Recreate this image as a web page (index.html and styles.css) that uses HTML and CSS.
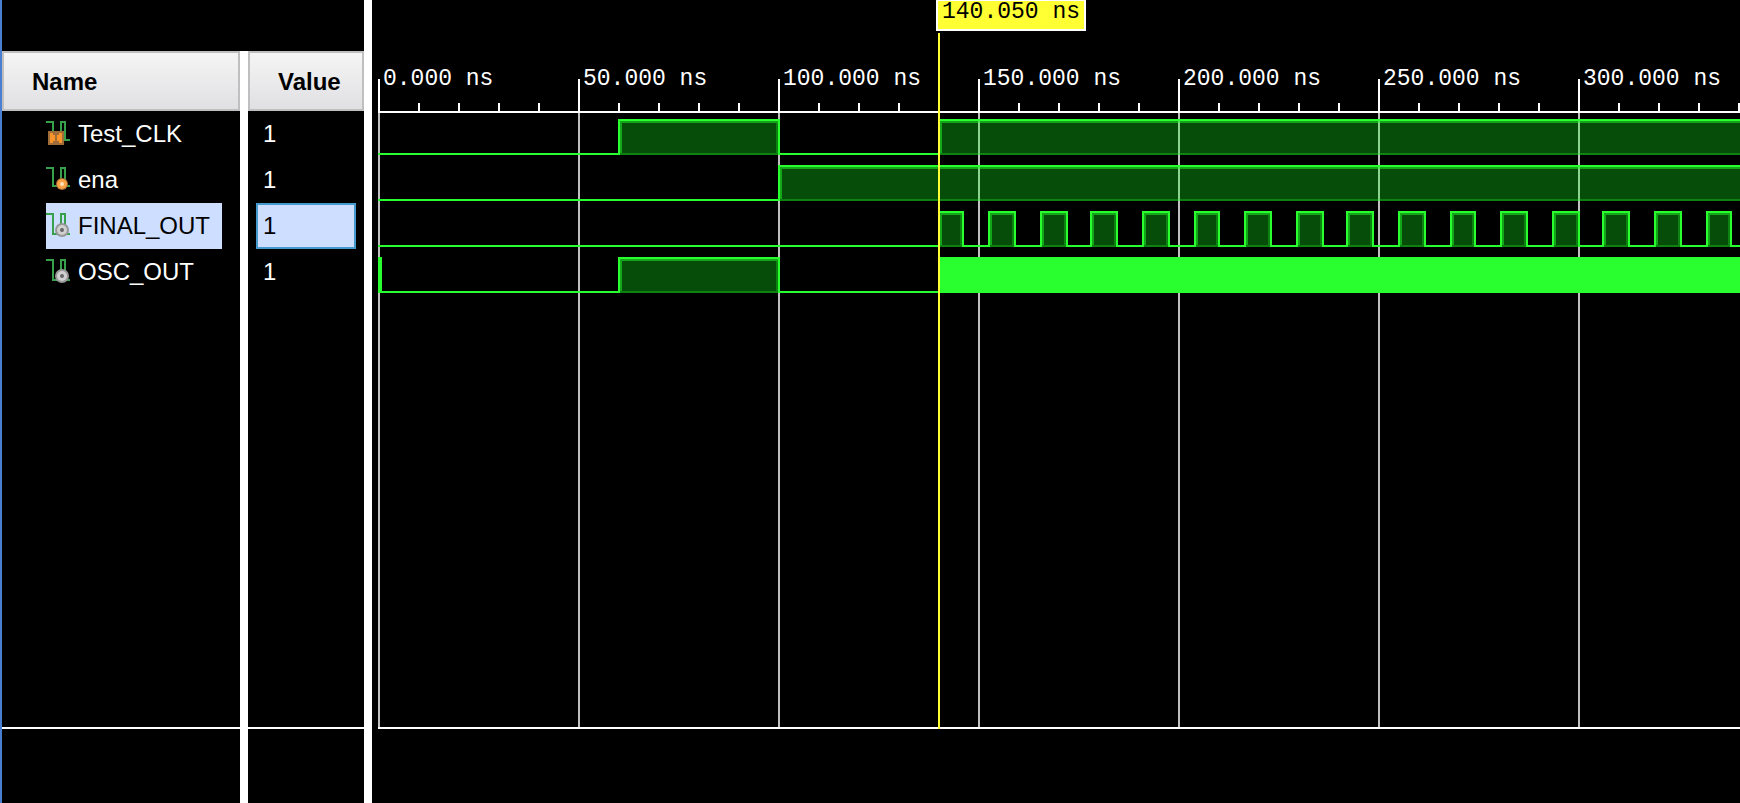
FILE: index.html
```html
<!DOCTYPE html>
<html lang="en">
<head>
<meta charset="utf-8">
<title>Waveform</title>
<link rel="stylesheet" href="styles.css">
</head>
<body>
<main class="viewer">
  <section class="column names">
    <h2 class="head">Name</h2>
    <ul class="rows">
      <li class="row"><span class="signal">
        <svg class="icon" viewBox="0 0 24 26"><path class="trace" d="M0 2H7V18M15 18V2H19V20H24"/><rect class="clk-edge" x="2" y="11" width="16" height="14"/><rect class="clk-body" x="4" y="13" width="12" height="10"/><path class="clk-glyph" d="M7 14H13M7 22H13M10 14V22"/></svg>Test_CLK</span></li>
      <li class="row"><span class="signal">
        <svg class="icon" viewBox="0 0 24 26"><path class="trace" d="M0 2H7V20H11M15 14V2H19V20H24"/><circle class="in-edge" cx="16" cy="18" r="6"/><circle class="in-body" cx="16" cy="18" r="5"/><circle class="in-core" cx="16" cy="18" r="2"/></svg>ena</span></li>
      <li class="row"><span class="signal selected">
        <svg class="icon" viewBox="0 0 24 26"><path class="trace" d="M0 2H7V22H11M15 14V2H19V22H24"/><circle class="out-edge" cx="16" cy="18" r="7"/><circle class="out-body" cx="16" cy="18" r="5"/><circle class="out-core" cx="16" cy="18" r="2"/></svg>FINAL_OUT</span></li>
      <li class="row"><span class="signal">
        <svg class="icon" viewBox="0 0 24 26"><path class="trace" d="M0 2H7V22H11M15 14V2H19V22H24"/><circle class="out-edge" cx="16" cy="18" r="7"/><circle class="out-body" cx="16" cy="18" r="5"/><circle class="out-core" cx="16" cy="18" r="2"/></svg>OSC_OUT</span></li>
    </ul>
    <div class="foot"></div>
  </section>
  <div class="splitter short"></div>
  <section class="column values">
    <h2 class="head">Value</h2>
    <ul class="rows">
      <li class="row"><span class="value">1</span></li>
      <li class="row"><span class="value">1</span></li>
      <li class="row"><span class="value selected">1</span></li>
      <li class="row"><span class="value">1</span></li>
    </ul>
    <div class="foot"></div>
  </section>
  <div class="splitter"></div>
  <section class="waves">
    <div class="ruler">
      <span class="major">0.000 ns</span><span class="major">50.000 ns</span><span class="major">100.000 ns</span><span class="major">150.000 ns</span><span class="major">200.000 ns</span><span class="major">250.000 ns</span><span class="major">300.000 ns</span>
    </div>
    <div class="plot">
      <svg class="wave" data-pulses="240-402 560-3000"></svg>
      <svg class="wave" data-pulses="400-3000"></svg>
      <svg class="wave" data-pulses="560-586 610-638 662-690 712-740 764-792 816-842 866-894 918-946 968-996 1020-1048 1072-1098 1122-1150 1174-1202 1224-1252 1276-1304 1328-1354 1380-1406"></svg>
      <svg class="wave" data-pulses="240-402" data-solid="0-4 560-3000"></svg>
    </div>
    <div class="foot"></div>
    <div class="cursor"><span class="flag">140.050 ns</span></div>
  </section>
</main>
<script src="waves.js"></script>
</body>
</html>
```
FILE: styles.css
```css
* { box-sizing: border-box; }

body {
  margin: 0;
  background: #000;
  color: #fff;
  font-family: "Liberation Sans", Arial, sans-serif;
}

.viewer {
  display: flex;
  height: 100vh;
  overflow: hidden;
  border-left: 2px solid #4a7ed0;
}

.column {
  display: flex;
  flex-direction: column;
  flex: none;
  padding-top: 51px;
}

.names { width: 238px; }
.values { width: 116px; }

.head {
  margin: 0;
  height: 60px;
  padding-left: 28px;
  border: 2px solid #bfbfbf;
  background: linear-gradient(#f5f5f5, #e0e0e3);
  color: #000;
  font-size: 24px;
  font-weight: bold;
  line-height: 58px;
}

.rows {
  flex: 1;
  margin: 0;
  padding: 0;
  list-style: none;
  border-bottom: 2px solid #fff;
}

.row {
  display: flex;
  height: 46px;
  font-size: 24px;
  line-height: 46px;
}

.signal {
  display: flex;
  margin-left: 44px;
  padding-right: 12px;
}

.signal.selected { background: #cddeff; color: #000; }

.icon {
  width: 24px;
  height: 26px;
  margin: 9px 8px 0 0;
}

.trace { fill: none; stroke: #36a04b; stroke-width: 2; }
.clk-edge { fill: #a06c3a; }
.clk-body { fill: #f7942a; }
.clk-glyph { fill: none; stroke: #a06c3a; stroke-width: 2; }
.in-edge { fill: #a86a35; }
.in-body { fill: #fba245; }
.in-core { fill: #ffe0b8; }
.out-edge { fill: #979797; }
.out-body { fill: #d0d0d0; }
.out-core { fill: #666; }

.value {
  flex: 1;
  margin: 0 8px;
  padding-left: 7px;
}

.value.selected {
  border: 2px solid #4499cf;
  padding-left: 5px;
  background: #cddeff;
  color: #000;
  line-height: 42px;
}

.foot { height: 74px; flex: none; }

.splitter { width: 8px; flex: none; background: #fff; }
.splitter.short { margin-top: 51px; }

.waves {
  position: relative;
  display: flex;
  flex-direction: column;
  flex: 1;
  min-width: 0;
  padding-left: 6px;
}

.ruler {
  display: flex;
  height: 113px;
  padding-top: 66px;
  overflow: hidden;
  border-bottom: 2px solid #fff;
  background:
    repeating-linear-gradient(90deg, #fff 0 2px, transparent 2px 200px) 0 79px / 100% 32px no-repeat,
    repeating-linear-gradient(90deg, #fff 0 2px, transparent 2px 40px) 0 103px / 100% 8px no-repeat;
}

.major {
  flex: none;
  width: 200px;
  padding-left: 5px;
}

.major, .flag {
  font-family: "Liberation Mono", "Courier New", monospace;
  font-size: 23px;
  line-height: 26px;
  white-space: pre;
}

.plot {
  flex: 1;
  border-bottom: 2px solid #fff;
  background: repeating-linear-gradient(90deg, #c0c0c0 0 2px, transparent 2px 200px);
}

.wave {
  display: block;
  width: 100%;
  height: 46px;
  shape-rendering: crispEdges;
}

.fill { fill: #10ff1c; fill-opacity: 0.3; }
.lit { fill: #20ff28; fill-opacity: 0.5; }
.shade { fill: #20ff28; fill-opacity: 0.3; }
.line { fill: #29ff2f; }

.cursor {
  position: absolute;
  left: 566px;
  top: 33px;
  bottom: 74px;
  width: 2px;
  background: #ffff33;
}

.flag {
  position: absolute;
  left: -2px;
  bottom: 100%;
  height: 31px;
  margin-bottom: 2px;
  padding: 0 4px;
  border: 2px solid #fff;
  border-top-width: 1px;
  background: #ffff33;
  color: #000;
  line-height: 22px;
}
```
FILE: waves.js
```js
// Each row is 46px tall, the high level starts at 6 and the low level ends at 42.
const HIGH = 6, LOW = 42, END = 3000;

function spans(text) {
  return (text || "").split(" ").filter(Boolean).map(s => s.split("-").map(Number));
}

function rect(svg, name, x, y, right, bottom) {
  if (right <= x) return;
  const r = document.createElementNS("http://www.w3.org/2000/svg", "rect");
  r.setAttribute("class", name);
  r.setAttribute("x", x);
  r.setAttribute("y", y);
  r.setAttribute("width", right - x);
  r.setAttribute("height", bottom - y);
  svg.append(r);
}

document.querySelectorAll(".wave").forEach(svg => {
  const pulses = spans(svg.dataset.pulses).map(p => [...p, false]);
  const solids = spans(svg.dataset.solid).map(p => [...p, true]);
  let low = 0;
  for (const [a, b, solid] of [...pulses, ...solids].sort((p, q) => p[0] - q[0])) {
    rect(svg, "line", low, LOW - 2, a, LOW);
    low = b;
    if (solid) {
      rect(svg, "line", a, HIGH, b, LOW);
      continue;
    }
    rect(svg, "line", a, HIGH, b, HIGH + 2);
    rect(svg, "line", a, HIGH + 2, a + 2, LOW);
    rect(svg, "line", b - 2, HIGH + 2, b, LOW);
    rect(svg, "fill", a + 2, HIGH + 2, b - 2, LOW);
    rect(svg, "lit", a + 2, HIGH + 2, b - 2, HIGH + 4);
    rect(svg, "lit", a + 2, HIGH + 4, a + 4, LOW - 2);
    rect(svg, "shade", b - 4, HIGH + 4, b - 2, LOW - 2);
    rect(svg, "shade", a + 2, LOW - 2, b - 2, LOW);
  }
  rect(svg, "line", low, LOW - 2, END, LOW);
});
```
